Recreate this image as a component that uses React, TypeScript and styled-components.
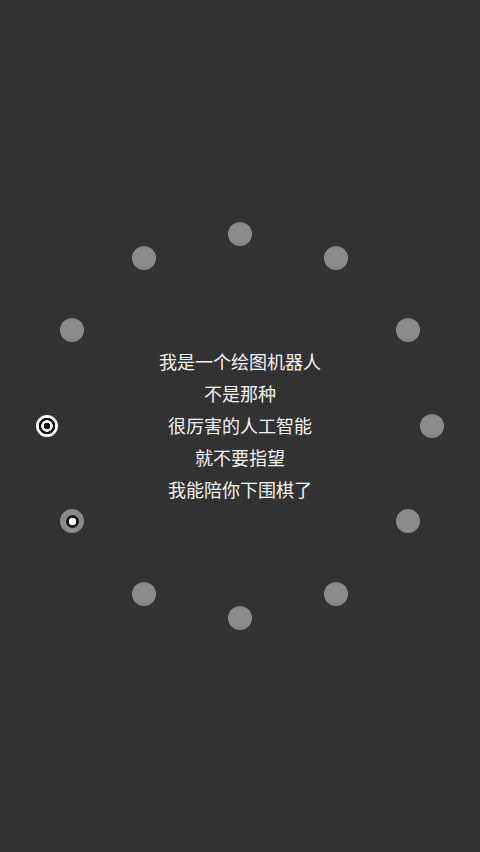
import { FC } from "react";
import styled, { createGlobalStyle } from "styled-components";

const GlobalStyle = createGlobalStyle`
  html, body {
    margin: 0;
    padding: 0;
    background: #323232;
  }
`;

// styled components
const Screen = styled.div`
  width: 480px;
  height: 852px;
  background: #323232;
  display: flex;
  align-items: center;
  justify-content: center;
  overflow: hidden;
`;

const Ring = styled.div`
  position: relative;
  width: 408px;
  height: 408px;
  display: flex;
  align-items: center;
  justify-content: center;
`;

const Lines = styled.div`
  display: flex;
  flex-direction: column;
  align-items: center;
  margin-top: -2px;
  font-family: "Noto Sans CJK SC", "Noto Sans", sans-serif;
  font-size: 18px;
  line-height: 32px;
  color: #f2f2f2;
`;

const Dot = styled.div`
  position: absolute;
  width: 24px;
  height: 24px;
  margin: -12px 0 0 -12px;
  border-radius: 50%;
  background: #8a8a8a;
  display: flex;
  align-items: center;
  justify-content: center;
`;

const Target = styled(Dot)`
  width: 22px;
  height: 22px;
  margin: -11px 0 0 -11px;
  background: radial-gradient(
    circle,
    #111 0 3px,
    #fff 3.5px 5.5px,
    #111 6px 8px,
    #fff 8.5px
  );
`;

const Hole = styled.span`
  width: 13px;
  height: 13px;
  border-radius: 50%;
  background: radial-gradient(circle, #fff 0 3.5px, #111 4px);
`;

// ==========================================================================
type Marker = "plain" | "target" | "hole";

// offsets from the centre, clockwise from the top
const spots: { dx: number; dy: number; kind: Marker }[] = [
  { dx: 0, dy: -192, kind: "plain" },
  { dx: 96, dy: -168, kind: "plain" },
  { dx: 168, dy: -96, kind: "plain" },
  { dx: 192, dy: 0, kind: "plain" },
  { dx: 168, dy: 95, kind: "plain" },
  { dx: 96, dy: 168, kind: "plain" },
  { dx: 0, dy: 192, kind: "plain" },
  { dx: -96, dy: 168, kind: "plain" },
  { dx: -168, dy: 95, kind: "hole" },
  { dx: -193, dy: 0, kind: "target" },
  { dx: -168, dy: -96, kind: "plain" },
  { dx: -96, dy: -168, kind: "plain" },
];

const lines = [
  "我是一个绘图机器人",
  "不是那种",
  "很厉害的人工智能",
  "就不要指望",
  "我能陪你下围棋了",
];
// ==========================================================================

const App: FC = () => (
  <>
    <GlobalStyle />
    <Screen>
      <Ring>
        {spots.map(({ dx, dy, kind }, i) => {
          const pos = { left: `${204 + dx}px`, top: `${204 + dy}px` };
          if (kind === "target") return <Target key={i} style={pos} />;
          return (
            <Dot key={i} style={pos}>
              {kind === "hole" && <Hole />}
            </Dot>
          );
        })}
        <Lines>
          {lines.map((l) => (
            <span key={l}>{l}</span>
          ))}
        </Lines>
      </Ring>
    </Screen>
  </>
);

export default App;
